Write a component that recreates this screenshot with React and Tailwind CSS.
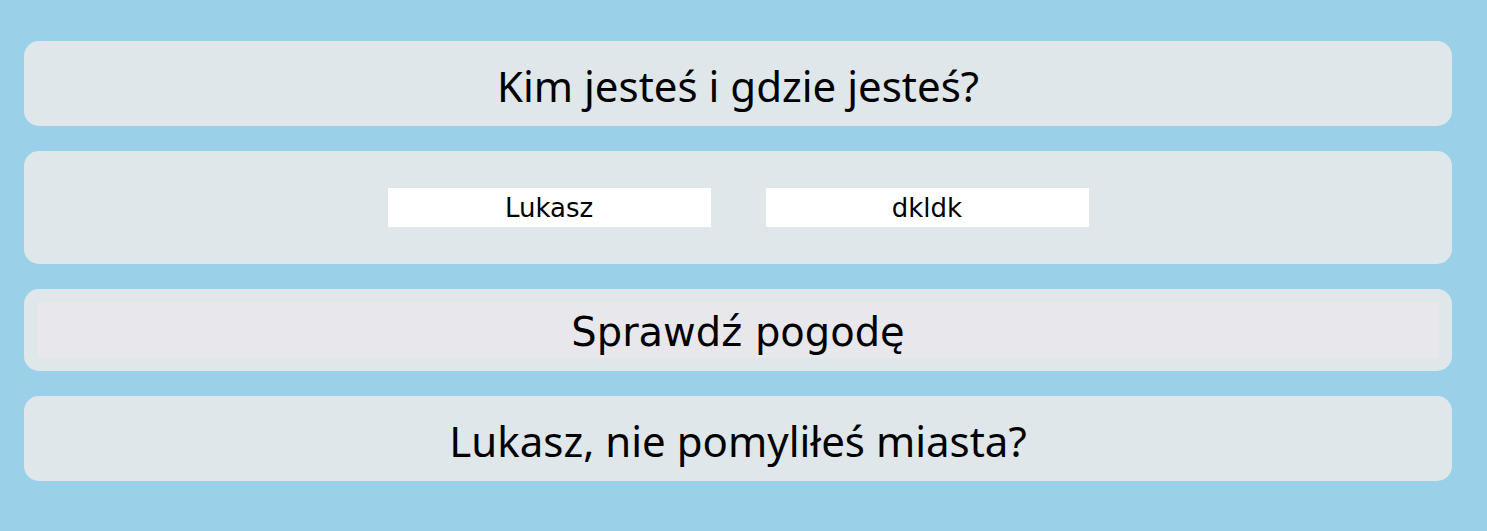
import { useState } from 'react';

export default function App() {
  const [name, setName] = useState('Lukasz');
  const [city, setCity] = useState('dkldk');

  return (
    <main className="min-h-screen w-full bg-[#9bd1e8] pl-6 pr-[35px] pt-[41px] pb-[50px] flex flex-col gap-[25px] text-black">
      <div className="h-[85px] rounded-[15px] bg-[#dfe7ea] flex items-center justify-center">
        <h1 className="text-[42px] font-['Noto_Sans',sans-serif] leading-none pt-1">Kim jesteś i gdzie jesteś?</h1>
      </div>

      <div className="h-[113px] rounded-[15px] bg-[#dfe7ea] flex items-center justify-center gap-[55px]">
        <input
          type="text"
          value={name}
          onChange={(e) => setName(e.target.value)}
          className="w-[323px] h-[39px] bg-white text-center text-[26px] font-['DejaVu_Sans',sans-serif] outline-none pt-[2px]"
        />
        <input
          type="text"
          value={city}
          onChange={(e) => setCity(e.target.value)}
          className="w-[323px] h-[39px] bg-white text-center text-[26px] font-['DejaVu_Sans',sans-serif] outline-none pt-[2px]"
        />
      </div>

      <div className="h-[82px] rounded-[15px] bg-[#dfe7ea] p-[13px] flex">
        <button className="flex-1 bg-[#e7e7ec] text-[40px] font-['DejaVu_Sans',sans-serif] leading-none pt-1">
          Sprawdź pogodę
        </button>
      </div>

      <div className="h-[85px] rounded-[15px] bg-[#dfe7ea] flex items-center justify-center">
        <p className="text-[42px] font-['Noto_Sans',sans-serif] leading-none pt-1">Lukasz, nie pomyliłeś miasta?</p>
      </div>
    </main>
  );
}
